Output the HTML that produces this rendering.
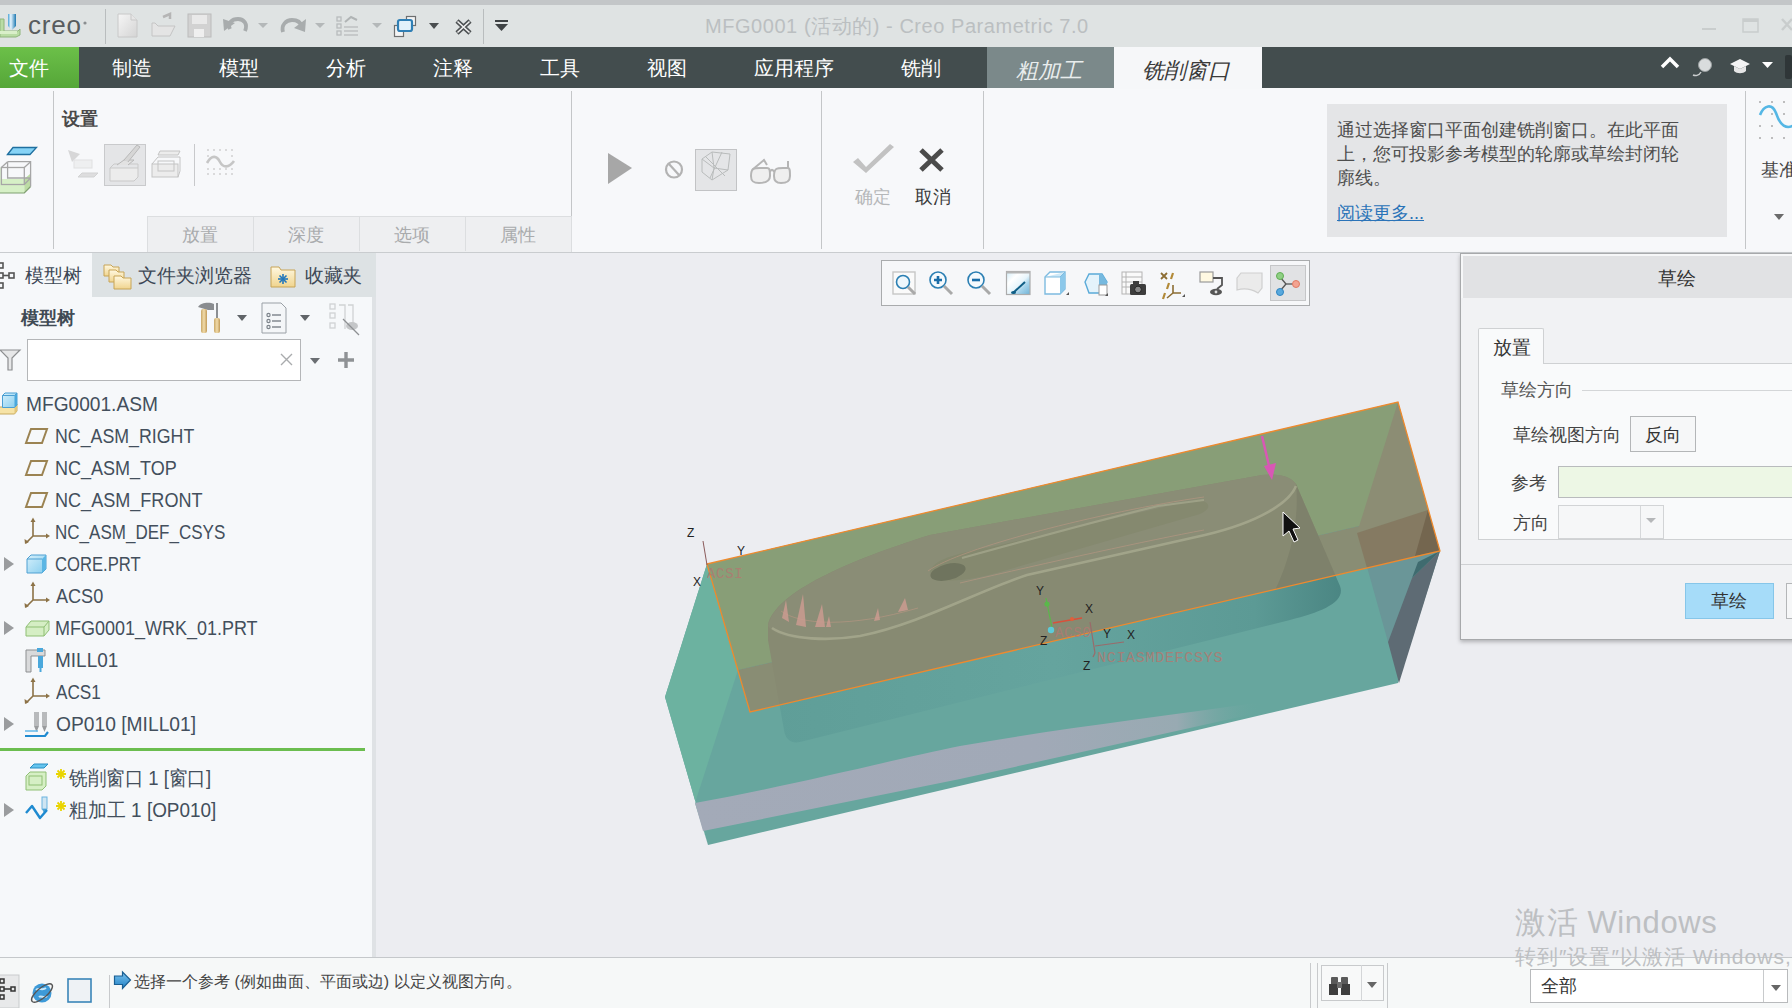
<!DOCTYPE html>
<html><head><meta charset="utf-8">
<style>
*{margin:0;padding:0;box-sizing:border-box}
html,body{width:1792px;height:1008px;overflow:hidden;font-family:"Liberation Sans",sans-serif;background:#ecedf1;position:relative}
.a{position:absolute}
.t{position:absolute;white-space:nowrap;line-height:20px;font-size:20px}
svg{position:absolute;overflow:visible}
#top{left:0;top:0;width:1792px;height:5px;background:#c3c6c8}
#title{left:0;top:5px;width:1792px;height:42px;background:#dfe3e3}
#menu{left:0;top:47px;width:1792px;height:41px;background:#434d4e}
#ribbon{left:0;top:88px;width:1792px;height:165px;background:#f7f8fa;border-bottom:1px solid #c9cccf}
#left{left:0;top:253px;width:372px;height:704px;background:#f6f8fa}
#gfx{left:372px;top:253px;width:1420px;height:704px;background:#ecedf1}
#status{left:0;top:957px;width:1792px;height:51px;background:#f6f8f8;border-top:1px solid #c5c8cb}
.mi{color:#fff;top:58px}
.vs{position:absolute;width:1px;background:#c4c6c8}
.tree{color:#434f5c;transform-origin:0 0}
.cjk{color:#555}
</style></head><body>
<div id="top" class="a"></div>
<div id="title" class="a"></div>
<div id="menu" class="a"></div>
<div id="ribbon" class="a"></div>
<div id="left" class="a"></div>
<div id="gfx" class="a"></div>
<div id="status" class="a"></div>

<!-- TITLE BAR -->
<div class="vs" style="left:105px;top:9px;height:35px;background:#b9bdbe"></div>
<div class="vs" style="left:483px;top:9px;height:35px;background:#b9bdbe"></div>
<div class="t" style="left:705px;top:16px;color:#bbbfc1;font-size:20px;letter-spacing:0.55px">MFG0001 (活动的) - Creo Parametric 7.0</div>


<!-- TITLE ICONS -->
<svg width="520" height="47" style="left:0;top:0">
<defs>
<linearGradient id="pen" x1="0" x2="1"><stop offset="0" stop-color="#4aa3d6"/><stop offset="0.35" stop-color="#e8f6ff"/><stop offset="1" stop-color="#1d78b0"/></linearGradient>
<linearGradient id="doc" x1="0" y1="0" x2="1" y2="1"><stop offset="0" stop-color="#f6f6f6"/><stop offset="1" stop-color="#d4d4d4"/></linearGradient>
</defs>
<path d="M0,19 L4,19 L4,31 L18,31 L20,29 L20,35 L16,37 L0,37 Z" fill="#b9dca4" stroke="#8fb57c" stroke-width="1"/>
<rect x="0" y="31" width="17" height="3" fill="#d9efc9"/>
<path d="M8,14 L16,14 L16,26 L12,30 L8,26 Z" fill="url(#pen)"/>
<text x="28" y="34" font-family="Liberation Sans" font-size="26" fill="#585c5e" letter-spacing="0.8">creo</text>
<circle cx="85" cy="23" r="1.6" fill="#8a8e90"/>
<!-- new doc -->
<path d="M118,14 L131,14 L137,20 L137,37 L118,37 Z" fill="url(#doc)" stroke="#c8c8c8"/>
<path d="M131,14 L131,20 L137,20" fill="#e6e6e6" stroke="#c8c8c8"/>
<!-- open folder -->
<path d="M152,23 L152,36 L170,36 L175,26 L158,26 L155,23 Z" fill="#e4e4e4" stroke="#c4c4c4"/>
<path d="M163,17 L170,14 L170,19" fill="none" stroke="#b5b5b5" stroke-width="2.5"/>
<!-- save -->
<rect x="188" y="14" width="23" height="23" fill="#d2d2d2" stroke="#bcbcbc"/>
<rect x="192" y="15" width="15" height="9" fill="#e9e9e9"/>
<rect x="194" y="29" width="10" height="8" fill="#efefef"/>
<!-- undo -->
<path d="M230,29 C227,23 232,19 238,19 C244,19 248,24 245,31" fill="none" stroke="#a8acad" stroke-width="3.8"/>
<polygon points="223,19 235,23 224,31" fill="#a8acad"/>
<polygon points="258,23 268,23 263,28" fill="#b4b8b9"/>
<!-- redo -->
<path d="M283,32 C281,25 286,20 292,20 C298,20 301,23 302,27" fill="none" stroke="#a8acad" stroke-width="3.8"/>
<polygon points="306,19 305,32 294,28" fill="#a8acad"/>
<polygon points="315,23 325,23 320,28" fill="#b4b8b9"/>
<!-- regen -->
<g fill="none" stroke="#b8bcbd" stroke-width="1.3"><rect x="337" y="17" width="4" height="4"/><rect x="337" y="24" width="4" height="4"/><rect x="337" y="31" width="4" height="4"/>
<line x1="344" y1="27" x2="358" y2="27"/><line x1="344" y1="31" x2="358" y2="31"/><line x1="344" y1="35" x2="358" y2="35"/></g>
<path d="M345,22 L351,17 L357,20" fill="none" stroke="#b0b4b5" stroke-width="2"/>
<polygon points="372,23 382,23 377,28" fill="#b4b8b9"/>
<!-- windows -->
<rect x="394.5" y="25.5" width="9" height="11" fill="#f4f4f4" stroke="#6d6f70" stroke-width="1.2"/>
<rect x="406.5" y="16.5" width="9" height="9" fill="#f4f4f4" stroke="#6d6f70" stroke-width="1.2"/>
<rect x="398" y="20" width="14" height="11" rx="2" fill="#e3f2fb" stroke="#2f7fb5" stroke-width="2.2"/>
<polygon points="429,23 439,23 434,29" fill="#4a4e50"/>
<!-- close -->
<path d="M457,21 L470,33 M470,21 L457,33" stroke="#4e5254" stroke-width="4.6"/>
<path d="M457.5,21.5 L469.5,32.5 M469.5,21.5 L457.5,32.5" stroke="#f2f2f2" stroke-width="1.6"/>
<!-- quick access -->
<rect x="495" y="20" width="13" height="2" fill="#3e4244"/>
<polygon points="495,24 508,24 501.5,31" fill="#3e4244"/>
</svg>
<!-- window controls -->
<svg width="100" height="47" style="left:1692px;top:0">
<rect x="10" y="28" width="14" height="2" fill="#c9cdcd"/>
<rect x="51" y="19" width="15" height="13" fill="none" stroke="#c9cdcd" stroke-width="1.5"/>
<rect x="51" y="19" width="15" height="3" fill="#c9cdcd"/>
<path d="M90,19 L100,30 M100,19 L90,30" stroke="#c9cdcd" stroke-width="2.5"/>
</svg>
<!-- menu right icons -->
<svg width="140" height="41" style="left:1652px;top:47px">
<polyline points="10,20 18,12 26,20" fill="none" stroke="#fff" stroke-width="3.5"/>
<circle cx="53" cy="18" r="6.5" fill="#d9dcdd" stroke="#9a9fa0" stroke-width="1"/>
<path d="M49,25 C47,29 43,29 41,28" fill="none" stroke="#c9cccd" stroke-width="1.5"/>
<path d="M78,17 L88,12 L98,17 L88,22 Z" fill="#f4f4f4"/>
<path d="M82,19 L82,24 C85,27 91,27 94,24 L94,19 L88,22 Z" fill="#e6e6e6"/>
<polygon points="110,15 121,15 115.5,21" fill="#fff"/>
<rect x="133" y="8" width="7" height="24" rx="2" fill="#2f3638"/>
</svg>

<!-- MENU BAR -->
<div class="a" style="left:0;top:47px;width:79px;height:41px;background:linear-gradient(#6cc049,#55a638)"></div>
<div class="t mi" style="left:9px">文件</div>
<div class="t mi" style="left:112px">制造</div>
<div class="t mi" style="left:219px">模型</div>
<div class="t mi" style="left:326px">分析</div>
<div class="t mi" style="left:433px">注释</div>
<div class="t mi" style="left:540px">工具</div>
<div class="t mi" style="left:647px">视图</div>
<div class="t mi" style="left:754px">应用程序</div>
<div class="t mi" style="left:901px">铣削</div>
<div class="a" style="left:987px;top:47px;width:127px;height:41px;background:#7b898a"></div>
<div class="t mi" style="left:1016px;top:60px;font-size:22px;line-height:22px;font-style:italic;color:#e9eded">粗加工</div>
<div class="a" style="left:1114px;top:47px;width:148px;height:42px;background:#f6f7f9"></div>
<div class="t mi" style="left:1142px;top:60px;font-size:22px;line-height:22px;font-style:italic;color:#3a3a3a">铣削窗口</div>

<!-- RIBBON -->
<div class="vs" style="left:53px;top:91px;height:158px"></div>
<div class="vs" style="left:571px;top:91px;height:158px"></div>
<div class="vs" style="left:821px;top:91px;height:158px"></div>
<div class="vs" style="left:983px;top:91px;height:158px"></div>
<div class="vs" style="left:1745px;top:91px;height:158px"></div>
<div class="t" style="left:62px;top:109px;font-size:17.5px;font-weight:bold;color:#4a4a4a">设置</div>


<!-- pressed buttons -->
<div class="a" style="left:104px;top:144px;width:42px;height:42px;background:#e4e5e7;border:1px solid #c9cacc"></div>
<div class="vs" style="left:194px;top:144px;height:42px;background:#c8c9cb"></div>
<div class="a" style="left:695px;top:149px;width:42px;height:42px;background:#e4e5e7;border:1px solid #c2c3c5"></div>

<!-- RIBBON ICONS -->
<svg width="1792" height="164" style="left:0;top:88px">
<!-- large mill window icon -->
<polygon points="7.5,66.5 13,59.5 36.5,59.5 30,66.5" fill="#86d3f6" stroke="#1f6f9f" stroke-width="1.3"/>
<path d="M0,91 L24.3,91 L24.3,105 L0,105 Z" fill="#d6f0c6"/>
<path d="M24.3,91 L30.6,85.5 L30.6,98.5 L24.3,105 Z" fill="#bcdca4"/>
<path d="M0,105 L24.3,105 L30.6,98.5" fill="none" stroke="#7f9f70" stroke-width="1.2"/>
<path d="M0,91 L1.4,91 L1.4,79.5 L0,79.5" fill="#dbeed0"/>
<g fill="none" stroke="#a6a6a6" stroke-width="1.3">
<path d="M7.6,73.7 L30.6,73.7 L30.6,98.5"/>
<rect x="1.4" y="79.5" width="22.9" height="17"/>
<path d="M1.4,79.5 L7.6,73.7 M24.3,79.5 L30.6,73.7 M7.6,73.7 L7.6,90 L30.6,90 M24.3,96.5 L30.6,90"/>
</g>
<!-- icon 1 faded -->
<g opacity="0.55">
<polygon points="68,62 80,66 72,74" fill="#bdbdbd"/>
<rect x="74" y="72" width="18" height="8" fill="#e8e8e8" stroke="#cfcfcf"/>
<polygon points="82,85 98,85 94,89 78,89" fill="#c8c8c8" stroke="#b5b5b5"/>
</g>
<!-- pressed icon pen/box -->
<g>
<path d="M110,80 L138,80 L138,89 L134,93 L110,93 Z" fill="#ececec" stroke="#c9c9c9"/>
<path d="M110,80 L114,76 L138,76 L138,80" fill="none" stroke="#c9c9c9"/>
<path d="M117,77 L124,72 L134,72 L128,77" fill="#e2e2e2" stroke="#b8b8b8"/>
<path d="M124,72 L137,57 L140,59 L128,74" fill="#d6d6d6" stroke="#b9b9b9"/>
</g>
<!-- icon 3 -->
<g stroke="#c4c4c4" fill="#ececec">
<polygon points="160,63 180,63 178,67 158,67"/>
<rect x="152" y="76" width="26" height="13"/>
<path d="M152,76 L158,69 L180,69 L180,83 L178,89" fill="none"/>
<rect x="158" y="73" width="16" height="10" fill="none"/>
</g>
<!-- dotted wave -->
<g fill="#d0d0d0"><circle cx="208" cy="62" r="1"/><circle cx="214" cy="62" r="1"/><circle cx="220" cy="62" r="1"/><circle cx="226" cy="62" r="1"/><circle cx="232" cy="62" r="1"/>
<circle cx="208" cy="81" r="1"/><circle cx="214" cy="81" r="1"/><circle cx="220" cy="81" r="1"/><circle cx="226" cy="81" r="1"/><circle cx="232" cy="81" r="1"/>
<circle cx="208" cy="86" r="1"/><circle cx="214" cy="86" r="1"/><circle cx="220" cy="86" r="1"/><circle cx="226" cy="86" r="1"/><circle cx="232" cy="86" r="1"/>
<circle cx="208" cy="68" r="1"/><circle cx="232" cy="68" r="1"/></g>
<path d="M207,75 C212,66 217,68 220,74 C223,80 229,80 234,73" fill="none" stroke="#c6c6c6" stroke-width="2.6"/>
<!-- play -->
<polygon points="608,65 632,80 608,96" fill="#a7a7a7"/>
<circle cx="674" cy="81.5" r="8" fill="none" stroke="#b3b3b3" stroke-width="2.2"/>
<line x1="669" y1="76" x2="679" y2="87" stroke="#b3b3b3" stroke-width="2.2"/>
<!-- cube in pressed -->
<g fill="none" stroke="#b9bcbc" stroke-width="1">
<path d="M702,71 L712,64 L730,66 L728,82 L712,92 L702,84 Z"/><path d="M712,64 L714,80 L712,92 M714,80 L728,82 M702,71 L714,80"/><path d="M705,68 L725,88 M722,64 L710,90"/>
</g>
<!-- glasses -->
<g fill="none" stroke="#b5b5b5" stroke-width="2">
<path d="M751,88 C751,80 754,80 760,80 L767,80 C770,80 770,83 770,88 C770,94 764,95 759,95 C753,95 751,93 751,88 Z" fill="#efefef"/>
<path d="M774,88 C774,80 777,80 783,80 L788,80 C790,80 790,83 790,88 C790,94 786,95 781,95 C776,95 774,93 774,88 Z" fill="#efefef"/>
<path d="M770,84 C771,81 773,81 774,84"/><path d="M752,82 L764,72 L767,77"/><path d="M788,80 L788,73"/>
</g>
<!-- check / x -->
<polygon points="853,74 858,70 866,79 890,56 894,59 866,85" fill="#c2c2c2"/>
<path d="M921,62 L942,82 M942,62 L921,82" stroke="#4b4b4b" stroke-width="5"/>
<!-- right datum wave -->
<g fill="#aaa"><circle cx="1760" cy="14" r="1"/><circle cx="1772" cy="14" r="1"/><circle cx="1784" cy="14" r="1"/><circle cx="1772" cy="26" r="1"/><circle cx="1784" cy="26" r="1"/><circle cx="1760" cy="38" r="1"/><circle cx="1772" cy="38" r="1"/><circle cx="1784" cy="38" r="1"/><circle cx="1760" cy="50" r="1"/><circle cx="1772" cy="50" r="1"/><circle cx="1784" cy="50" r="1"/></g>
<path d="M1760,27 C1764,17 1772,15 1776,25 C1780,37 1786,43 1796,36" fill="none" stroke="#55b7e5" stroke-width="2.6"/>
<polygon points="1774,126 1784,126 1779,132" fill="#6b6b6b"/>
</svg>

<!-- ribbon sub tabs -->
<div class="a" style="left:147px;top:216px;width:425px;height:36px;background:#eeeff1;border:1px solid #dcdee0;border-bottom:none"></div>
<div class="vs" style="left:253px;top:217px;height:34px;background:#dcdee0"></div>
<div class="vs" style="left:359px;top:217px;height:34px;background:#dcdee0"></div>
<div class="vs" style="left:465px;top:217px;height:34px;background:#dcdee0"></div>
<div class="t" style="left:182px;top:225px;font-size:18px;color:#a9abad">放置</div>
<div class="t" style="left:288px;top:225px;font-size:18px;color:#a9abad">深度</div>
<div class="t" style="left:394px;top:225px;font-size:18px;color:#a9abad">选项</div>
<div class="t" style="left:500px;top:225px;font-size:18px;color:#a9abad">属性</div>

<!-- confirm/cancel -->
<div class="t" style="left:855px;top:187px;font-size:18px;color:#b5b7b9">确定</div>
<div class="t" style="left:915px;top:187px;font-size:18px;color:#3a3a3a">取消</div>

<!-- info box -->
<div class="a" style="left:1327px;top:104px;width:400px;height:133px;background:#e4e5e7"></div>
<div class="a" style="left:1337px;top:118px;font-size:18px;line-height:24px;color:#4e4e4e;width:360px">通过选择窗口平面创建铣削窗口。在此平面<br>上，您可投影参考模型的轮廓或草绘封闭轮<br>廓线。</div>
<div class="t" style="left:1337px;top:203px;font-size:18px;line-height:21px;color:#2a73b8;text-decoration:underline">阅读更多...</div>
<div class="t" style="left:1761px;top:160px;font-size:18px;color:#444">基准</div>


<!-- LEFT PANEL -->
<div class="a" style="left:92px;top:253px;width:284px;height:44px;background:#dde2e4"></div>
<div class="a" style="left:372px;top:297px;width:4px;height:660px;background:#dfe2e5"></div>
<div class="t" style="left:25px;top:266px;font-size:18.5px;color:#3d4856">模型树</div>
<div class="t" style="left:138px;top:266px;font-size:18.5px;color:#3d4856">文件夹浏览器</div>
<div class="t" style="left:305px;top:266px;font-size:18.5px;color:#3d4856">收藏夹</div>
<div class="t" style="left:21px;top:308px;font-size:18px;font-weight:bold;color:#3f4a54">模型树</div>
<div class="a" style="left:27px;top:339px;width:274px;height:42px;background:#fff;border:1px solid #b4b6b8"></div>

<div class="t tree" style="left:26px;top:394px;transform:scaleX(0.957)">MFG0001.ASM</div>
<div class="t tree" style="left:55px;top:426px;transform:scaleX(0.889)">NC_ASM_RIGHT</div>
<div class="t tree" style="left:55px;top:458px;transform:scaleX(0.901)">NC_ASM_TOP</div>
<div class="t tree" style="left:55px;top:490px;transform:scaleX(0.903)">NC_ASM_FRONT</div>
<div class="t tree" style="left:55px;top:522px;transform:scaleX(0.851)">NC_ASM_DEF_CSYS</div>
<div class="t tree" style="left:55px;top:554px;transform:scaleX(0.832)">CORE.PRT</div>
<div class="t tree" style="left:56px;top:586px;transform:scaleX(0.904)">ACS0</div>
<div class="t tree" style="left:55px;top:618px;transform:scaleX(0.899)">MFG0001_WRK_01.PRT</div>
<div class="t tree" style="left:55px;top:650px;transform:scaleX(0.949)">MILL01</div>
<div class="t tree" style="left:56px;top:682px;transform:scaleX(0.858)">ACS1</div>
<div class="t tree" style="left:56px;top:714px;transform:scaleX(0.962)">OP010 [MILL01]</div>
<div class="a" style="left:0;top:748px;width:365px;height:3px;background:#6bbd4f"></div>
<div class="t tree" style="left:69px;top:768px;transform:scaleX(0.927)">铣削窗口 1 [窗口]</div>
<div class="t tree" style="left:69px;top:800px;transform:scaleX(0.947)">粗加工 1 [OP010]</div>


<!-- LEFT PANEL ICONS -->
<svg width="376" height="600" style="left:0;top:252px">
<defs>
<linearGradient id="fold" x1="0" y1="0" x2="0" y2="1"><stop offset="0" stop-color="#fff8e0"/><stop offset="1" stop-color="#f0d48e"/></linearGradient>
<linearGradient id="hm" x1="0" x2="1"><stop offset="0" stop-color="#c9a868"/><stop offset="0.5" stop-color="#f2dcaa"/><stop offset="1" stop-color="#c09a58"/></linearGradient>
<linearGradient id="cube" x1="0" y1="0" x2="1" y2="1"><stop offset="0" stop-color="#d6f0fb"/><stop offset="1" stop-color="#86cdee"/></linearGradient>
</defs>
<!-- tab icons -->
<g fill="none" stroke="#555" stroke-width="1.6"><rect x="-2" y="11" width="5" height="5"/><rect x="-2" y="21" width="5" height="5"/><rect x="-2" y="31" width="5" height="5"/><rect x="9" y="21" width="5" height="5"/><line x1="3" y1="23.5" x2="9" y2="23.5"/></g>
<g stroke="#c7a457" stroke-width="1"><path d="M104,13 L111,13 L113,15 L119,15 L119,24 L104,24 Z" fill="url(#fold)"/><path d="M109,18 L116,18 L118,20 L124,20 L124,30 L109,30 Z" fill="url(#fold)"/><path d="M114,24 L121,24 L123,26 L131,26 L131,37 L114,37 Z" fill="url(#fold)"/></g>
<path d="M271,15 L279,15 L281,18 L295,18 L295,35 L271,35 Z" fill="url(#fold)" stroke="#c7a457"/>
<g stroke="#2277bb" stroke-width="1.6"><line x1="283" y1="22" x2="283" y2="32"/><line x1="278" y1="27" x2="288" y2="27"/><line x1="279.5" y1="23.5" x2="286.5" y2="30.5"/><line x1="286.5" y1="23.5" x2="279.5" y2="30.5"/></g>
<!-- header icons -->
<path d="M198,55 C201,50 210,50 214,52 L214,58 L208,58 Z" fill="#8a8d90"/>
<rect x="201" y="57" width="6" height="24" rx="2" fill="url(#hm)"/>
<rect x="216" y="51" width="2" height="16" fill="#8c8f92"/>
<rect x="214" y="66" width="6" height="15" rx="2" fill="url(#hm)"/>
<polygon points="237,63 247,63 242,69" fill="#606468"/>
<path d="M262,51 L281,51 L286,56 L286,81 L262,81 Z" fill="#f4f6f8" stroke="#9aa0a6"/>
<g fill="none" stroke="#7d848b" stroke-width="1.2"><circle cx="268.5" cy="63" r="1.6"/><circle cx="268.5" cy="69" r="1.6"/><circle cx="268.5" cy="75" r="1.6"/></g>
<g stroke="#8a9096" stroke-width="1.6"><line x1="272" y1="63" x2="281" y2="63"/><line x1="272" y1="69" x2="281" y2="69"/><line x1="272" y1="75" x2="281" y2="75"/></g>
<polygon points="300,63 310,63 305,69" fill="#606468"/>
<g fill="none" stroke="#d0d2d4" stroke-width="1.3"><rect x="330" y="52" width="5" height="5"/><rect x="330" y="61" width="5" height="5"/><rect x="330" y="71" width="5" height="5"/><path d="M339,53 L345,53 L345,77 M348,53 L353,53 L353,77"/></g>
<ellipse cx="352" cy="74" rx="6" ry="4" fill="#c4c6c8"/>
<line x1="343" y1="67" x2="359" y2="83" stroke="#8d9093" stroke-width="1.2"/>
<!-- filter row -->
<path d="M0,98 L20,98 L12,106 L12,118 L8,118 L8,106 Z" fill="#e6e7e8" stroke="#8c8e90" stroke-width="1.2"/>
<path d="M281,102 L292,113 M292,102 L281,113" stroke="#a9abad" stroke-width="1.4"/>
<polygon points="310,106 320,106 315,112" fill="#6a6e72"/>
<path d="M346,100 L346,116 M338,108 L354,108" stroke="#8f9295" stroke-width="3.4"/>
<!-- asm icon -->
<path d="M-2,155 L14.5,155 L17,152 L17,159 L14.5,162 L-2,162 Z" fill="#f6e3a6" stroke="#c8aa5e" stroke-width="1"/>
<path d="M14.5,155 L17,152 L17,159 L14.5,162 Z" fill="#e2c679"/>
<path d="M2.5,143.5 L5,141 L17,141 L17,153 L14.5,155.5 L2.5,155.5 Z" fill="url(#cube)" stroke="#4a9fd3" stroke-width="1"/>
<path d="M14.5,143.5 L17,141 L17,153 L14.5,155.5 Z" fill="#49a7dc"/>
<path d="M2.5,143.5 L14.5,143.5 L17,141" fill="none" stroke="#4a9fd3" stroke-width="1"/>
<!-- datum planes -->
<g fill="none" stroke="#9b8352" stroke-width="2">
<polygon points="31,177 47,177 42,191 26,191"/>
<polygon points="31,209 47,209 42,223 26,223"/>
<polygon points="31,241 47,241 42,255 26,255"/>
</g>
<!-- csys -->
<g fill="none" stroke="#8c7246" stroke-width="1.6">
<path d="M33,268 L33,284 L48,284 M33,284 L26,291"/><path d="M33,332 L33,348 L48,348 M33,348 L26,355"/><path d="M33,428 L33,444 L48,444 M33,444 L26,451"/>
</g>
<g fill="#8c7246"><polygon points="30.5,270 35.5,270 33,265.5"/><polygon points="46,281.5 46,286.5 50,284"/><polygon points="25,292 24.5,287 29,290"/><polygon points="30.5,334 35.5,334 33,329.5"/><polygon points="46,345.5 46,350.5 50,348"/><polygon points="25,356 24.5,351 29,354"/><polygon points="30.5,430 35.5,430 33,425.5"/><polygon points="46,441.5 46,446.5 50,444"/><polygon points="25,452 24.5,447 29,450"/></g>
<!-- expand arrows -->
<g fill="#9a9c9e"><polygon points="4,305 14,312 4,319"/><polygon points="4,369 14,376 4,383"/><polygon points="4,465 14,472 4,479"/><polygon points="4,551 14,558 4,565"/></g>
<!-- core cube -->
<path d="M27,307 L31,303 L46,303 L46,317 L42,321 L27,321 Z" fill="url(#cube)" stroke="#4fa0d2"/>
<path d="M42,307 L46,303 L46,317 L42,321 Z" fill="#5bb6e4"/>
<line x1="27" y1="307" x2="42" y2="307" stroke="#4fa0d2"/>
<!-- workpiece -->
<path d="M26,375 L31,369 L49,369 L49,378 L44,384 L26,384 Z" fill="#d5eec4" stroke="#8fbf75"/>
<path d="M26,375 L44,375 L49,369 M44,375 L44,384" fill="none" stroke="#8fbf75"/>
<!-- mill -->
<path d="M26,420 L26,398 L45,398 L45,404 L31,404 L31,420 Z" fill="#d9dadb" stroke="#8d8f91"/>
<rect x="37" y="396" width="6" height="4" fill="#4aa8dc"/>
<rect x="38" y="404" width="5" height="12" fill="#4aa8dc"/>
<rect x="39.5" y="416" width="2" height="4" fill="#4aa8dc"/>
<!-- op010 -->
<rect x="34" y="460" width="5" height="14" fill="#b8babc"/><rect x="42" y="460" width="5" height="14" fill="#b8babc"/>
<path d="M34,474 L36.5,480 L39,474 Z M42,474 L44.5,480 L47,474 Z" fill="#9a9c9e"/>
<path d="M25,484 L45,484 L48,480" fill="none" stroke="#1f8ad0" stroke-width="2.2"/>
<path d="M25,479 L38,479" fill="none" stroke="#62b8e8" stroke-width="1.5"/>
<!-- mill window item -->
<polygon points="34,512 48,512 44,516 30,516" fill="#65c4ee" stroke="#2a8fc4"/>
<path d="M26,524 L30,520 L46,520 L46,534 L42,538 L26,538 Z" fill="#d6efc5" stroke="#8fbf75"/>
<rect x="29" y="524" width="13" height="9" fill="none" stroke="#8fbf75"/>
<!-- rough -->
<rect x="42" y="545" width="5" height="12" fill="#cfe5f2" stroke="#6ab3df"/>
<path d="M42,557 L44.5,562 L47,557 Z" fill="#4aa3d6"/>
<path d="M26,561 L32,554 L40,566 L47,558" fill="none" stroke="#1f8ad0" stroke-width="2.4" stroke-linejoin="round"/>
<!-- asterisks -->
<g stroke="#e9d400" stroke-width="1.8"><path d="M61,517 L61,527 M56,522 L66,522 M57.5,518.5 L64.5,525.5 M64.5,518.5 L57.5,525.5"/><path d="M61,549 L61,559 M56,554 L66,554 M57.5,550.5 L64.5,557.5 M64.5,550.5 L57.5,557.5"/></g>
</svg>

<!-- STATUS -->
<div class="vs" style="left:109px;top:975px;height:33px;background:#c8cacc"></div>
<div class="t" style="left:134px;top:972px;font-size:16px;color:#444">选择一个参考 (例如曲面、平面或边) 以定义视图方向。</div>
<div class="vs" style="left:1310px;top:963px;height:45px;background:#c8cacc"></div>
<div class="vs" style="left:1317px;top:963px;height:45px;background:#c8cacc"></div>
<div class="a" style="left:1321px;top:965px;width:63px;height:36px;background:#f8f9f9;border:1px solid #c8cacc"></div>
<div class="vs" style="left:1361px;top:965px;height:36px;background:#d4d6d8"></div>
<div class="vs" style="left:1387px;top:963px;height:45px;background:#c8cacc"></div>
<div class="a" style="left:1530px;top:969px;width:258px;height:34px;background:#fff;border:1px solid #b8babc"></div>
<div class="vs" style="left:1763px;top:970px;height:32px;background:#c8cacc"></div>
<div class="t" style="left:1541px;top:976px;font-size:18px;color:#333">全部</div>
<div class="t" style="left:1515px;top:907px;font-size:31px;line-height:31px;color:#bdbfc2;letter-spacing:0.6px">激活 Windows</div>
<div class="t" style="left:1515px;top:946px;font-size:21px;line-height:21px;color:#bdbfc2;letter-spacing:1px">转到″设置″以激活 Windows,</div>


<!-- 3D MODEL -->
<svg width="1792" height="1008" style="left:0;top:0" viewBox="0 0 1792 1008">
<defs>
<clipPath id="olive"><polygon points="707,564 1398,402 1440,551 750,712"/></clipPath>
<clipPath id="front"><polygon points="750,712 1440,551 1398,683 708,845 665,697"/></clipPath>
<linearGradient id="lav" gradientUnits="userSpaceOnUse" x1="695" y1="0" x2="1262" y2="0"><stop offset="0" stop-color="#a3aab8"/><stop offset="0.6" stop-color="#a1a9b7"/><stop offset="0.85" stop-color="#98aab2"/><stop offset="1" stop-color="#67a69e" stop-opacity="0"/></linearGradient>
</defs>
<!-- block silhouette -->
<polygon points="707,564 1398,402 1440,551 1398,683 708,845 665,697" fill="#67a69e"/>
<!-- left lighter face -->
<polygon points="707,564 738,670 695,803 708,845 665,697" fill="#6cb2a0"/>
<!-- lavender band -->
<path d="M695,803 C800,784 900,758 960,746 C1050,730 1150,718 1262,702 L1262,712 L960,779 L703,831 Z" fill="url(#lav)"/>
<!-- right darker face -->
<polygon points="1367,567 1440,551 1412,578 1388,642" fill="#6a9698"/>
<polygon points="1440,551 1399,683 1388,642 1412,578" fill="#5e6b74"/>
<polygon points="1440,551 1412,578 1418,562" fill="#3f6b6f"/>
<!-- olive top -->
<polygon points="707,564 1398,402 1428,510 738,670" fill="#889e77"/>
<polygon points="738,670 1428,510 1440,551 750,712" fill="#898d74"/>
<polygon points="1398,402 1428,510 1357,533" fill="#8c8d74"/>
<polygon points="1357,533 1428,510 1440,551 1367,568" fill="#857a62"/>
<polygon points="1428,510 1440,551 1415,556" fill="#74664f"/>
<!-- core: olive part -->
<g clip-path="url(#olive)">
<path d="M768,625 C775,592 850,560 930,535 L1262,475 C1280,473 1291,477 1296,484 L1340,586 C1346,602 1322,612 1290,620 L800,742 C790,744 785,738 784,730 L768,640 Z" fill="#878a72"/>
<path d="M1296,484 L1340,586 C1346,602 1322,612 1290,620 L1250,630 C1290,580 1300,520 1296,484 Z" fill="#7b7e68" opacity="0.7"/>
<path d="M768,626 C775,592 850,560 930,535 L1262,475 C1280,473 1291,477 1296,484 C1294,502 1270,520 1205,535 L1027,575 C980,590 920,624 860,636 C820,642 780,642 768,626 Z" fill="#8a8d76"/>
<path d="M930,571 C935,558 960,553 1000,545 L1190,501 C1210,498 1214,508 1200,514 L1000,572 C965,582 930,585 930,571 Z" fill="#85896f"/>
<ellipse cx="948" cy="572" rx="18" ry="8" transform="rotate(-14 948 572)" fill="#6f745e"/>
<path d="M772,628 C790,640 830,641 860,636 C920,624 980,590 1027,575 L1205,535 C1260,522 1290,502 1296,486" fill="none" stroke="#aaac92" stroke-width="2.6" opacity="0.75"/>
<path d="M962,558 C1020,542 1100,520 1158,506 L1204,500" fill="none" stroke="#a6a88e" stroke-width="2.2" opacity="0.75"/>
<path d="M928,571 C960,548 1100,512 1204,497 M960,583 C1050,562 1150,540 1204,530 M781,611 C800,625 850,628 918,608" fill="none" stroke="#c89a86" stroke-width="0.8" opacity="0.6"/>
</g>
<!-- core: teal part -->
<defs><linearGradient id="cw" x1="0" y1="0" x2="1" y2="0"><stop offset="0" stop-color="#5f9e98"/><stop offset="0.5" stop-color="#65a49e"/><stop offset="0.85" stop-color="#5c9a95"/><stop offset="1" stop-color="#4b8683"/></linearGradient></defs>
<g clip-path="url(#front)">
<path d="M768,625 C775,592 850,560 930,535 L1262,475 C1280,473 1291,477 1296,484 L1340,586 C1346,602 1322,612 1290,620 L800,742 C790,744 785,738 784,730 L768,640 Z" fill="url(#cw)"/>
</g>
<!-- pink spikes -->
<g fill="#cf9c92" opacity="0.8">
<polygon points="782,618 786,600 789,622"/><polygon points="796,625 803,594 806,627"/><polygon points="815,627 822,604 825,627"/><polygon points="826,627 829,616 831,627"/><polygon points="874,621 878,608 880,620"/><polygon points="898,612 905,598 908,610"/>
</g>
<!-- orange outline -->
<polygon points="707,564 1398,402 1440,551 750,712" fill="none" stroke="#ee8a2e" stroke-width="1.3"/>
<!-- pink arrow -->
<line x1="1262" y1="436" x2="1270" y2="470" stroke="#d957b5" stroke-width="2.5"/>
<polygon points="1264,466 1276,463 1272,480" fill="#d957b5"/>
<!-- csys labels -->
<g font-family="Liberation Sans" font-size="12" fill="#222">
<text x="687" y="537" transform="scale(1,1)">Z</text><text x="737" y="555">Y</text><text x="693" y="586">X</text>
<text x="1036" y="595">Y</text><text x="1040" y="645">Z</text><text x="1085" y="613">X</text>
<text x="1103" y="638">Y</text><text x="1127" y="639">X</text><text x="1083" y="670">Z</text>
</g>
<g font-family="Liberation Mono" font-size="15" fill="#b07a72" opacity="0.85" letter-spacing="0.7">
<text x="707" y="578" font-size="14">ACSI</text><text x="1055" y="637" font-size="14">ACS0</text><text x="1097" y="662">NCIASMDEFCSYS</text>
</g>
<line x1="703" y1="541" x2="707" y2="565" stroke="#8a5a5a" stroke-width="1"/>
<line x1="1046" y1="598" x2="1052" y2="628" stroke="#5ab84a" stroke-width="1.2"/>
<circle cx="1047" cy="604" r="2.6" fill="#5ab84a"/>
<line x1="1053" y1="623" x2="1082" y2="618" stroke="#d9503a" stroke-width="1.4"/>
<circle cx="1072" cy="619" r="2" fill="#e0603a"/>
<circle cx="1051" cy="630" r="3.2" fill="#5ccad8"/>
<line x1="1090" y1="622" x2="1095" y2="653" stroke="#9a6a6a" stroke-width="1.2"/>
<line x1="1095" y1="646" x2="1124" y2="642" stroke="#9a6a6a" stroke-width="1.2"/>
<line x1="1095" y1="653" x2="1093" y2="657" stroke="#9a6a6a" stroke-width="1.2"/>
<!-- cursor -->
<path d="M1283,512 L1283,536 L1289,531 L1294,542 L1298,540 L1293,529 L1300,528 Z" fill="#111" stroke="#fff" stroke-width="1"/>
</svg>

<!-- GFX TOOLBAR -->
<div class="a" style="left:881px;top:260px;width:429px;height:46px;background:#f6f7f9;border:1px solid #a9abad"></div>
<div class="a" style="left:1270px;top:265px;width:36px;height:36px;background:#e1e2e4;border:1px solid #c5c6c8"></div>


<!-- GFX TOOLBAR ICONS -->
<svg width="440" height="50" style="left:870px;top:255px">
<defs><linearGradient id="cb" x1="0" y1="0" x2="1" y2="1"><stop offset="0" stop-color="#e8f5fc"/><stop offset="1" stop-color="#8cc6e6"/></linearGradient></defs>
<!-- zoom fit -->
<rect x="23" y="17" width="22" height="22" fill="#fafafa" stroke="#c6c6c6" stroke-width="1.4"/>
<circle cx="33" cy="27" r="6.5" fill="#eef7fc" stroke="#2b7fb3" stroke-width="1.6"/>
<line x1="38" y1="32" x2="45" y2="39" stroke="#a9a9a9" stroke-width="3"/>
<!-- zoom in -->
<circle cx="68" cy="25" r="8" fill="#f5fafd" stroke="#2b7fb3" stroke-width="1.6"/>
<path d="M64,25 L72,25 M68,21 L68,29" stroke="#1a6da8" stroke-width="2.6"/>
<line x1="74" y1="31" x2="82" y2="39" stroke="#a9a9a9" stroke-width="3"/>
<!-- zoom out -->
<circle cx="106" cy="25" r="8" fill="#f5fafd" stroke="#2b7fb3" stroke-width="1.6"/>
<path d="M102,25 L110,25" stroke="#1a6da8" stroke-width="2.6"/>
<line x1="112" y1="31" x2="120" y2="39" stroke="#a9a9a9" stroke-width="3"/>
<!-- repaint -->
<defs><linearGradient id="rp" x1="0" y1="0" x2="1" y2="1"><stop offset="0" stop-color="#d2ecf8"/><stop offset="0.3" stop-color="#ffffff"/><stop offset="0.55" stop-color="#e8f5fb"/><stop offset="0.7" stop-color="#a8d5ec"/><stop offset="1" stop-color="#6fb2d6"/></linearGradient></defs>
<rect x="136.5" y="16.5" width="23.5" height="23" fill="url(#rp)" stroke="#acacac" stroke-width="1.2"/>
<rect x="136.5" y="16.5" width="23.5" height="2" fill="#b5b5b5"/>
<path d="M143,38 L155,27" stroke="#0f5e86" stroke-width="2"/>
<ellipse cx="143.5" cy="37.5" rx="2.5" ry="1.6" fill="#0f5e86"/>
<!-- cube -->
<path d="M175,22 L180,17 L195,17 L195,34 L190,39 L175,39 Z" fill="#ffffff" stroke="#7dbbe0" stroke-width="1.4"/>
<path d="M190,22 L195,17 L195,34 L190,39 Z" fill="#8cc8ea"/>
<path d="M175,22 L190,22 L195,17" fill="#cfe9f7" stroke="#7dbbe0"/>
<polygon points="196,40 199,37 199,40" fill="#555"/>
<!-- saved orient -->
<path d="M215,27 L219,19 L232,19 L237,27 L232,38 L219,38 Z" fill="#e4f3fb" stroke="#5aaad8" stroke-width="1.4"/>
<path d="M229,19 L232,19 L237,27 L237,38 L229,38 Z" fill="#76b9df"/>
<rect x="229" y="30" width="8" height="10" fill="#fff" stroke="#999"/>
<polygon points="235,41 238,38 238,41" fill="#555"/>
<!-- table camera -->
<g stroke="#b4b4b4" fill="#fafafa"><rect x="252" y="17" width="20" height="22"/><line x1="252" y1="22" x2="272" y2="22"/><line x1="252" y1="27" x2="272" y2="27"/><line x1="252" y1="32" x2="272" y2="32"/><line x1="256" y1="17" x2="256" y2="39"/></g>
<rect x="260" y="29" width="16" height="11" rx="1.5" fill="#3d3d3d"/>
<rect x="263" y="26" width="6" height="4" fill="#3d3d3d"/>
<circle cx="268" cy="34.5" r="3.4" fill="#888" stroke="#222"/>
<!-- datum display -->
<path d="M291,18 L297,24 M297,18 L291,24" stroke="#8c6d33" stroke-width="1.8"/>
<path d="M301,24 L303,18 M297,34 L299,28 M293,44 L295,38" stroke="#b28a38" stroke-width="2.2"/>
<path d="M303,38 L303,30 M303,38 L311,38 M303,38 L297,43" stroke="#8c6d33" stroke-width="1.6" fill="none"/>
<polygon points="312,42 315,39 315,42" fill="#555"/>
<!-- annotation eye -->
<rect x="330" y="17" width="13" height="10" fill="#fff9e2" stroke="#9a9a9a" stroke-width="1.2"/>
<path d="M343,23 L352,23 L352,30 L347,34" fill="none" stroke="#555" stroke-width="1.8"/>
<ellipse cx="346" cy="37" rx="6" ry="3.2" fill="#555"/>
<circle cx="346" cy="37" r="1.4" fill="#ddd"/>
<!-- surface -->
<path d="M367,23 L371,18 L392,18 L392,33 L388,38 C380,33 374,33 367,35 Z" fill="#ebebeb" stroke="#cfcfcf" stroke-width="1.2"/>
<!-- connected nodes -->
<g stroke="#555" stroke-width="1.3"><line x1="410" y1="22" x2="416" y2="29"/><line x1="416" y1="29" x2="425" y2="29"/><line x1="416" y1="29" x2="410" y2="36"/></g>
<circle cx="410" cy="21" r="3.5" fill="#8fcf84" stroke="#5fae52"/>
<circle cx="426" cy="29" r="3.5" fill="#f3a391" stroke="#e07a64"/>
<circle cx="410" cy="37" r="3.5" fill="#59a9dd" stroke="#2f85c2"/>
</svg>

<!-- STATUS ICONS -->
<svg width="140" height="51" style="left:0;top:957px">
<rect x="-1" y="18" width="20" height="33" fill="#e8e9ea" stroke="#c9cbcd"/>
<g fill="none" stroke="#333" stroke-width="1.5"><rect x="0" y="22" width="4" height="4"/><rect x="0" y="30" width="4" height="4"/><rect x="0" y="38" width="4" height="4"/><rect x="11" y="30" width="4" height="4"/><line x1="4" y1="32" x2="11" y2="32"/></g>
<circle cx="42" cy="36" r="9.5" fill="#3d9ad8"/>
<path d="M36,33 C39,30 42,34 46,31 M39,40 C41,38 44,42 47,39" stroke="#c8e8fa" stroke-width="2" fill="none"/>
<ellipse cx="42" cy="36" rx="13" ry="5" transform="rotate(-40 42 36)" fill="none" stroke="#555" stroke-width="1.4"/>
<rect x="68" y="22" width="23" height="23" fill="#eef2f5" stroke="#3a85b8" stroke-width="1.6"/>
<defs><linearGradient id="arr" x1="0" y1="0" x2="0" y2="1"><stop offset="0" stop-color="#7cc4ef"/><stop offset="1" stop-color="#1f7fc4"/></linearGradient></defs><path d="M114.5,19 L122.5,19 L122.5,15 L130.5,23 L122.5,31.5 L122.5,27.5 L114.5,27.5 Z" fill="url(#arr)" stroke="#1a5f93" stroke-width="1.2"/>
</svg>
<!-- binoculars + arrows -->
<svg width="60" height="40" style="left:1321px;top:965px">
<rect x="10" y="12" width="7" height="14" rx="1" fill="#5a5a5a"/><rect x="20" y="12" width="7" height="14" rx="1" fill="#5a5a5a"/>
<rect x="8" y="19" width="9" height="11" fill="#3e3e3e"/><rect x="20" y="19" width="9" height="11" fill="#3e3e3e"/><rect x="16" y="17" width="5" height="6" fill="#6e6e6e"/>
<polygon points="46,17 56,17 51,23" fill="#666"/>
</svg>
<svg width="30" height="34" style="left:1762px;top:969px">
<polygon points="9,16 19,16 14,22" fill="#666"/>
</svg>

<!-- DIALOG -->
<div class="a" style="left:1460px;top:253px;width:340px;height:387px;background:#f1f2f4;border:1px solid #a7a9ab;box-shadow:0 2px 4px rgba(0,0,0,0.25)"></div>
<div class="a" style="left:1461px;top:254px;width:331px;height:44px;background:#e1e2e4;border-left:2px solid #f6f7f8;border-top:2px solid #f6f7f8"></div>
<div class="t" style="left:1658px;top:269px;font-size:19px;color:#333">草绘</div>
<div class="a" style="left:1478px;top:363px;width:320px;height:177px;background:#f9fafb;border:1px solid #cfd1d3"></div>
<div class="a" style="left:1478px;top:328px;width:66px;height:36px;background:#f9fafb;border:1px solid #cfd1d3;border-bottom:none;border-radius:2px 2px 0 0"></div>
<div class="t" style="left:1493px;top:338px;font-size:19px;color:#333">放置</div>
<div class="t" style="left:1501px;top:380px;font-size:18px;color:#555">草绘方向</div>
<div class="a" style="left:1582px;top:390px;width:210px;height:1px;background:#d4d6d8"></div>
<div class="t" style="left:1513px;top:425px;font-size:18px;color:#444">草绘视图方向</div>
<div class="a" style="left:1630px;top:416px;width:66px;height:36px;background:#f6f7f8;border:1px solid #b4b6b8"></div>
<div class="t" style="left:1645px;top:425px;font-size:18px;color:#333">反向</div>
<div class="t" style="left:1511px;top:473px;font-size:18px;color:#444">参考</div>
<div class="a" style="left:1558px;top:466px;width:240px;height:32px;background:#edf7e5;border:1px solid #b9bbbd"></div>
<div class="t" style="left:1513px;top:513px;font-size:18px;color:#444">方向</div>
<div class="a" style="left:1558px;top:505px;width:106px;height:34px;background:#f6f7f8;border:1px solid #d2d4d6"></div>
<div class="vs" style="left:1640px;top:506px;height:32px;background:#d6d8da"></div>
<svg width="20" height="20" style="left:1642px;top:512px"><polygon points="4,6 14,6 9,11" fill="#b5b7b9"/></svg>
<div class="a" style="left:1461px;top:564px;width:331px;height:1px;background:#cfd1d3"></div>
<div class="a" style="left:1685px;top:583px;width:89px;height:36px;background:#a6dcf9;border:1px solid #86c6e9"></div>
<div class="t" style="left:1711px;top:591px;font-size:18px;color:#333">草绘</div>
<div class="a" style="left:1786px;top:583px;width:20px;height:36px;background:#f6f7f8;border:1px solid #b4b6b8"></div>

</body></html>
